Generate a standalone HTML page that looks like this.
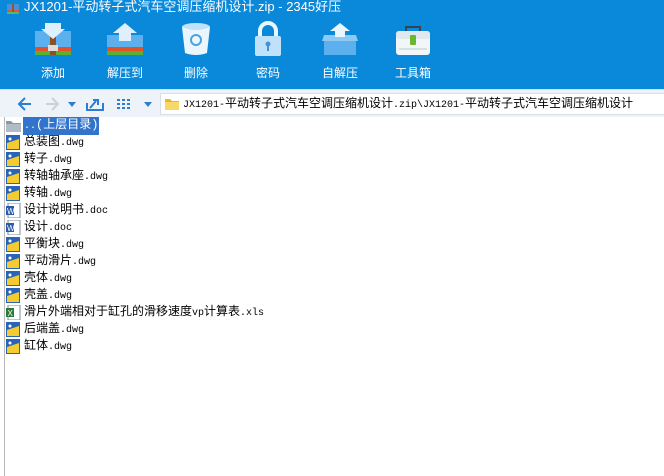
<!DOCTYPE html>
<html><head><meta charset="utf-8"><style>
*{margin:0;padding:0;box-sizing:border-box}
body{width:664px;height:476px;overflow:hidden;background:#fff;font-family:"Liberation Sans","Noto Sans CJK SC",sans-serif;position:relative}
.top{position:absolute;left:0;top:0;width:664px;height:89px;background:#0a88da}
.title{position:absolute;left:24px;top:-2px;color:#fff;font-size:13px;line-height:18px}
.tb{position:absolute;top:21px;width:60px;text-align:center;color:#fff;font-size:12px}
.tb svg{display:block;margin:0 auto 7px}
.bar{position:absolute;left:0;top:89px;width:664px;height:28px;background:#eef3f9;border-top:1px solid #cfe0f0}
.addr{position:absolute;left:160px;top:3px;width:504px;height:22px;background:#fff;border:1px solid #d8dee6;border-right:none;font-family:"Liberation Mono","Noto Sans CJK SC",monospace;font-size:12px;line-height:20px;padding-left:22px;color:#000;white-space:nowrap}
.list{position:absolute;left:0;top:117px;font-family:"Liberation Mono","Noto Sans CJK SC",monospace;font-size:12px}
.row{position:absolute;left:6px;height:17px;line-height:17px;white-space:nowrap}
.row span{position:absolute;left:17px;padding:0 1px}
.l{font-size:10px;font-family:"Liberation Mono",monospace}
.ic{position:absolute;left:0;top:1px;width:15px;height:15px}
.vl{position:absolute;left:4px;top:117px;width:1px;height:359px;background:#bbb}
</style></head><body>
<div class="top">
<svg style="position:absolute;left:6px;top:1px" width="14" height="14"><rect x="1" y="3" width="12" height="10" fill="#4a90d9"/><rect x="1" y="9" width="12" height="2" fill="#d9534f"/><rect x="1" y="11" width="12" height="2" fill="#5cb85c"/><rect x="6" y="3" width="2" height="8" fill="#8b5a2b"/></svg>
<div class="title">JX1201-平动转子式汽车空调压缩机设计.zip - 2345好压</div>
<div class="tb" style="left:23px"><svg width="40" height="36"><rect x="2" y="10" width="36" height="24" fill="#5db0ee"/><rect x="2" y="26" width="36" height="4" fill="#e0522c"/><rect x="2" y="30" width="36" height="4" fill="#5cb030"/><rect x="17" y="14" width="6" height="20" fill="#8a5028"/><rect x="15" y="24" width="10" height="6" fill="#ddd"/><path d="M12 2h16v6h4l-12 10-12-10h4z" fill="#dff0fc"/></svg>添加</div>
<div class="tb" style="left:95px"><svg width="40" height="36"><rect x="2" y="14" width="36" height="20" fill="#5db0ee"/><rect x="2" y="26" width="36" height="4" fill="#e0522c"/><rect x="2" y="30" width="36" height="4" fill="#5cb030"/><path d="M20 2l12 10h-6v8h-12v-8h-6z" fill="#dff0fc"/></svg>解压到</div>
<div class="tb" style="left:166px"><svg width="40" height="36"><ellipse cx="20" cy="6" rx="14" ry="4" fill="#bfe2fa"/><path d="M6 6l3 26q11 4 22 0l3-26q-14 6-28 0z" fill="#eaf6fe"/><circle cx="20" cy="19" r="5" fill="none" stroke="#4aa3e0" stroke-width="2"/></svg>删除</div>
<div class="tb" style="left:238px"><svg width="40" height="36"><path d="M12 16v-6a8 8 0 0 1 16 0v6" fill="none" stroke="#eaf6fe" stroke-width="4"/><rect x="7" y="15" width="26" height="20" rx="2" fill="#bfe2fa"/><circle cx="20" cy="23" r="2.5" fill="#4a90d9"/><rect x="19" y="24" width="2" height="6" fill="#4a90d9"/></svg>密码</div>
<div class="tb" style="left:310px"><svg width="40" height="36"><path d="M4 14h32v20h-32z" fill="#5db0ee"/><path d="M4 14l-2 6h36l-2-6z" fill="#8ccaf5"/><path d="M20 2l10 8h-5v6h-10v-6h-5z" fill="#eaf6fe"/></svg>自解压</div>
<div class="tb" style="left:383px"><svg width="40" height="36"><path d="M13 10v-4h14v4" fill="none" stroke="#345" stroke-width="2"/><rect x="3" y="10" width="34" height="24" rx="3" fill="#f2f6f8"/><rect x="3" y="10" width="34" height="8" rx="3" fill="#dfe8ee"/><rect x="17" y="14" width="6" height="10" rx="1" fill="#6ab82e"/><line x1="6" y1="28" x2="34" y2="28" stroke="#bcc" /></svg>工具箱</div>
</div>
<div class="bar">
<svg style="position:absolute;left:16px;top:6px" width="150" height="16">
<path d="M9 2l-6 6 6 6M3 8h12" fill="none" stroke="#2a7fd4" stroke-width="2"/>
<path d="M36 2l6 6-6 6M42 8h-12" fill="none" stroke="#c8d2dc" stroke-width="2"/>
<path d="M52 6h8l-4 5z" fill="#2a7fd4"/>
<path d="M71 7v7h16v-7" fill="none" stroke="#2a7fd4" stroke-width="2"/><path d="M74 12l6-7M77 4h5v5" fill="none" stroke="#2a7fd4" stroke-width="2"/>
<g fill="#2a7fd4"><rect x="101" y="3" width="3" height="2"/><rect x="106" y="3" width="3" height="2"/><rect x="111" y="3" width="3" height="2"/><rect x="101" y="7" width="3" height="2"/><rect x="106" y="7" width="3" height="2"/><rect x="111" y="7" width="3" height="2"/><rect x="101" y="11" width="3" height="2"/><rect x="106" y="11" width="3" height="2"/><rect x="111" y="11" width="3" height="2"/></g>
<path d="M128 6h8l-4 5z" fill="#2a7fd4"/>
</svg>
<div class="addr"><svg style="position:absolute;left:3px;top:3px" width="16" height="14"><path d="M1 2h5l2 2h7v9h-14z" fill="#e8b830"/><path d="M1 5h14v8h-14z" fill="#f8d868"/></svg><span class="l">JX1201-</span>平动转子式汽车空调压缩机设计<span class="l">.zip\JX1201-</span>平动转子式汽车空调压缩机设计</div>
</div>
<div class="vl"></div>
<div class="list">
<div class="row" style="top:0"><svg class="ic" viewBox="0 0 15 15"><path d="M0 3h5l2 2h8v9h-15z" fill="#8a98a4"/><path d="M0 6h15v8h-15z" fill="#b0bcc6"/></svg><span style="background:#3274cc;color:#fff"><span class="l" style="position:static;padding:0">..</span>(上层目录)</span></div>
<div class="row" style="top:17px"><svg class="ic" viewBox="0 0 15 15"><rect x="0" y="0" width="14" height="15" fill="#2a64b8"/><path d="M1 8l12-4v10h-12z" fill="#f5cc30"/><circle cx="4" cy="4" r="1.5" fill="#fff"/></svg><span>总装图<b class="l" style="font-weight:normal">.dwg</b></span></div>
<div class="row" style="top:34px"><svg class="ic" viewBox="0 0 15 15"><rect x="0" y="0" width="14" height="15" fill="#2a64b8"/><path d="M1 8l12-4v10h-12z" fill="#f5cc30"/><circle cx="4" cy="4" r="1.5" fill="#fff"/></svg><span>转子<b class="l" style="font-weight:normal">.dwg</b></span></div>
<div class="row" style="top:51px"><svg class="ic" viewBox="0 0 15 15"><rect x="0" y="0" width="14" height="15" fill="#2a64b8"/><path d="M1 8l12-4v10h-12z" fill="#f5cc30"/><circle cx="4" cy="4" r="1.5" fill="#fff"/></svg><span>转轴轴承座<b class="l" style="font-weight:normal">.dwg</b></span></div>
<div class="row" style="top:68px"><svg class="ic" viewBox="0 0 15 15"><rect x="0" y="0" width="14" height="15" fill="#2a64b8"/><path d="M1 8l12-4v10h-12z" fill="#f5cc30"/><circle cx="4" cy="4" r="1.5" fill="#fff"/></svg><span>转轴<b class="l" style="font-weight:normal">.dwg</b></span></div>
<div class="row" style="top:85px"><svg class="ic" viewBox="0 0 15 15"><rect x="2" y="0" width="12" height="15" fill="#fff" stroke="#7a8ca0"/><rect x="0" y="3" width="8" height="9" fill="#2a5aa8"/><text x="1" y="11" font-size="8" fill="#fff" font-family="Liberation Sans">W</text></svg><span>设计说明书<b class="l" style="font-weight:normal">.doc</b></span></div>
<div class="row" style="top:102px"><svg class="ic" viewBox="0 0 15 15"><rect x="2" y="0" width="12" height="15" fill="#fff" stroke="#7a8ca0"/><rect x="0" y="3" width="8" height="9" fill="#2a5aa8"/><text x="1" y="11" font-size="8" fill="#fff" font-family="Liberation Sans">W</text></svg><span>设计<b class="l" style="font-weight:normal">.doc</b></span></div>
<div class="row" style="top:119px"><svg class="ic" viewBox="0 0 15 15"><rect x="0" y="0" width="14" height="15" fill="#2a64b8"/><path d="M1 8l12-4v10h-12z" fill="#f5cc30"/><circle cx="4" cy="4" r="1.5" fill="#fff"/></svg><span>平衡块<b class="l" style="font-weight:normal">.dwg</b></span></div>
<div class="row" style="top:136px"><svg class="ic" viewBox="0 0 15 15"><rect x="0" y="0" width="14" height="15" fill="#2a64b8"/><path d="M1 8l12-4v10h-12z" fill="#f5cc30"/><circle cx="4" cy="4" r="1.5" fill="#fff"/></svg><span>平动滑片<b class="l" style="font-weight:normal">.dwg</b></span></div>
<div class="row" style="top:153px"><svg class="ic" viewBox="0 0 15 15"><rect x="0" y="0" width="14" height="15" fill="#2a64b8"/><path d="M1 8l12-4v10h-12z" fill="#f5cc30"/><circle cx="4" cy="4" r="1.5" fill="#fff"/></svg><span>壳体<b class="l" style="font-weight:normal">.dwg</b></span></div>
<div class="row" style="top:170px"><svg class="ic" viewBox="0 0 15 15"><rect x="0" y="0" width="14" height="15" fill="#2a64b8"/><path d="M1 8l12-4v10h-12z" fill="#f5cc30"/><circle cx="4" cy="4" r="1.5" fill="#fff"/></svg><span>壳盖<b class="l" style="font-weight:normal">.dwg</b></span></div>
<div class="row" style="top:187px"><svg class="ic" viewBox="0 0 15 15"><rect x="2" y="0" width="12" height="15" fill="#fff" stroke="#7a8ca0"/><rect x="0" y="3" width="8" height="9" fill="#2a7a3a"/><text x="1.5" y="11" font-size="8" fill="#fff" font-family="Liberation Sans">X</text></svg><span>滑片外端相对于缸孔的滑移速度<b class="l" style="font-weight:normal">vp</b>计算表<b class="l" style="font-weight:normal">.xls</b></span></div>
<div class="row" style="top:204px"><svg class="ic" viewBox="0 0 15 15"><rect x="0" y="0" width="14" height="15" fill="#2a64b8"/><path d="M1 8l12-4v10h-12z" fill="#f5cc30"/><circle cx="4" cy="4" r="1.5" fill="#fff"/></svg><span>后端盖<b class="l" style="font-weight:normal">.dwg</b></span></div>
<div class="row" style="top:221px"><svg class="ic" viewBox="0 0 15 15"><rect x="0" y="0" width="14" height="15" fill="#2a64b8"/><path d="M1 8l12-4v10h-12z" fill="#f5cc30"/><circle cx="4" cy="4" r="1.5" fill="#fff"/></svg><span>缸体<b class="l" style="font-weight:normal">.dwg</b></span></div>
</div>
</body></html>
